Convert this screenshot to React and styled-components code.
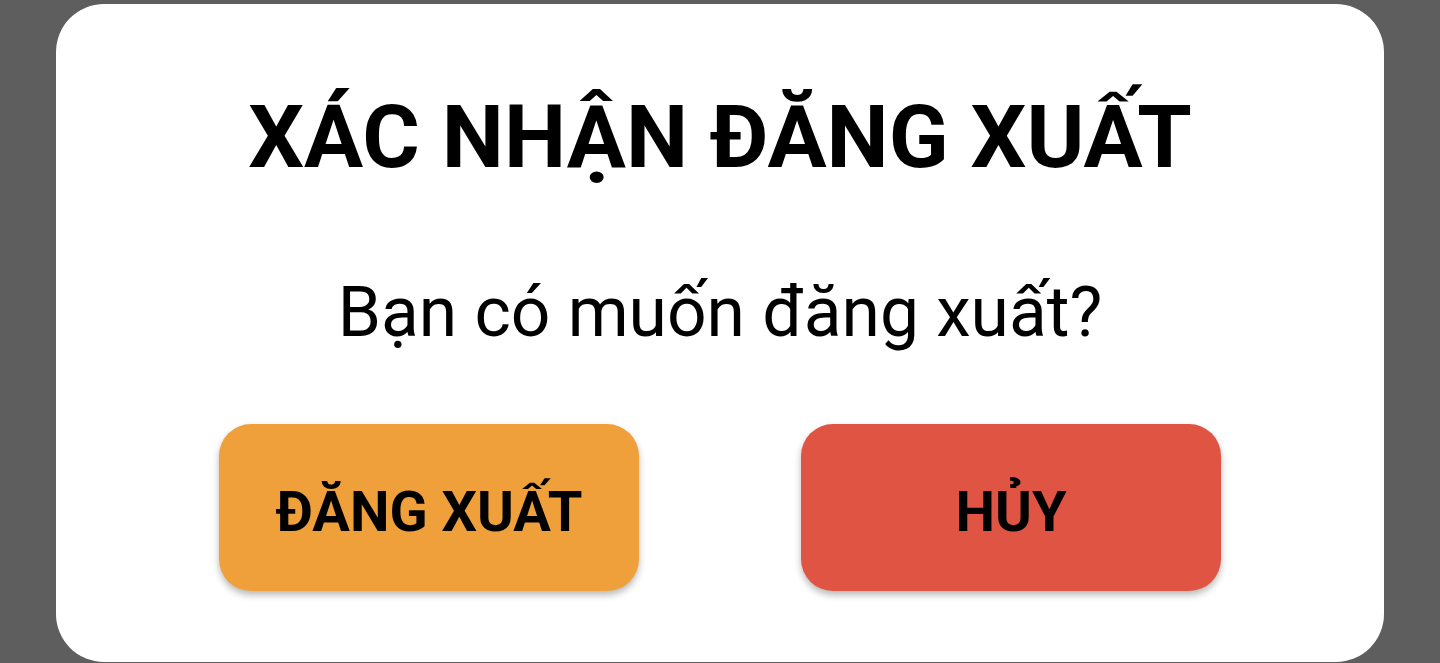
import styled, { createGlobalStyle } from 'styled-components';

const GlobalStyle = createGlobalStyle`
  html, body {
    margin: 0;
    padding: 0;
    background: #5e5e5e;
    font-family: Roboto, "Noto Sans", sans-serif;
  }
`;

const Screen = styled.div`
  width: 1440px;
  height: 663px;
  overflow: hidden;
  display: flex;
  justify-content: center;
  align-items: flex-start;
  padding-top: 4px;
  box-sizing: border-box;
`;

const Dialog = styled.div`
  width: 1328px;
  height: 658px;
  box-sizing: border-box;
  background: #fff;
  border-radius: 48px;
  padding-top: 80px;
  display: flex;
  flex-direction: column;
  align-items: center;
`;

const Title = styled.h1`
  margin: 0;
  font-size: 88px;
  line-height: 1.2;
  font-weight: 700;
  color: #000;
`;

const Message = styled.p`
  margin: 81px 0 0;
  font-size: 69.5px;
  line-height: 1.2;
  font-weight: 400;
  color: #000;
`;

const ButtonRow = styled.div`
  margin-top: 70px;
  display: flex;
  gap: 162px;
`;

const ActionButton = styled.button`
  width: 420px;
  height: 167px;
  border: none;
  border-radius: 32px;
  background: ${({ color }) => color};
  box-shadow: 0 4px 7px rgba(0, 0, 0, 0.28);
  font-family: Roboto, "Noto Sans", sans-serif;
  font-size: 56px;
  font-weight: 700;
  color: #000;
  padding: 10px 0 0;
  display: flex;
  align-items: center;
  justify-content: center;
  cursor: pointer;
`;

const App = () => (
  <>
    <GlobalStyle />
    <Screen>
      <Dialog>
        <Title>XÁC NHẬN ĐĂNG XUẤT</Title>
        <Message>Bạn có muốn đăng xuất?</Message>
        <ButtonRow>
          <ActionButton type='button' color='#f0a03a'>ĐĂNG XUẤT</ActionButton>
          <ActionButton type='button' color='#e05443'>HỦY</ActionButton>
        </ButtonRow>
      </Dialog>
    </Screen>
  </>
);

export default App;
